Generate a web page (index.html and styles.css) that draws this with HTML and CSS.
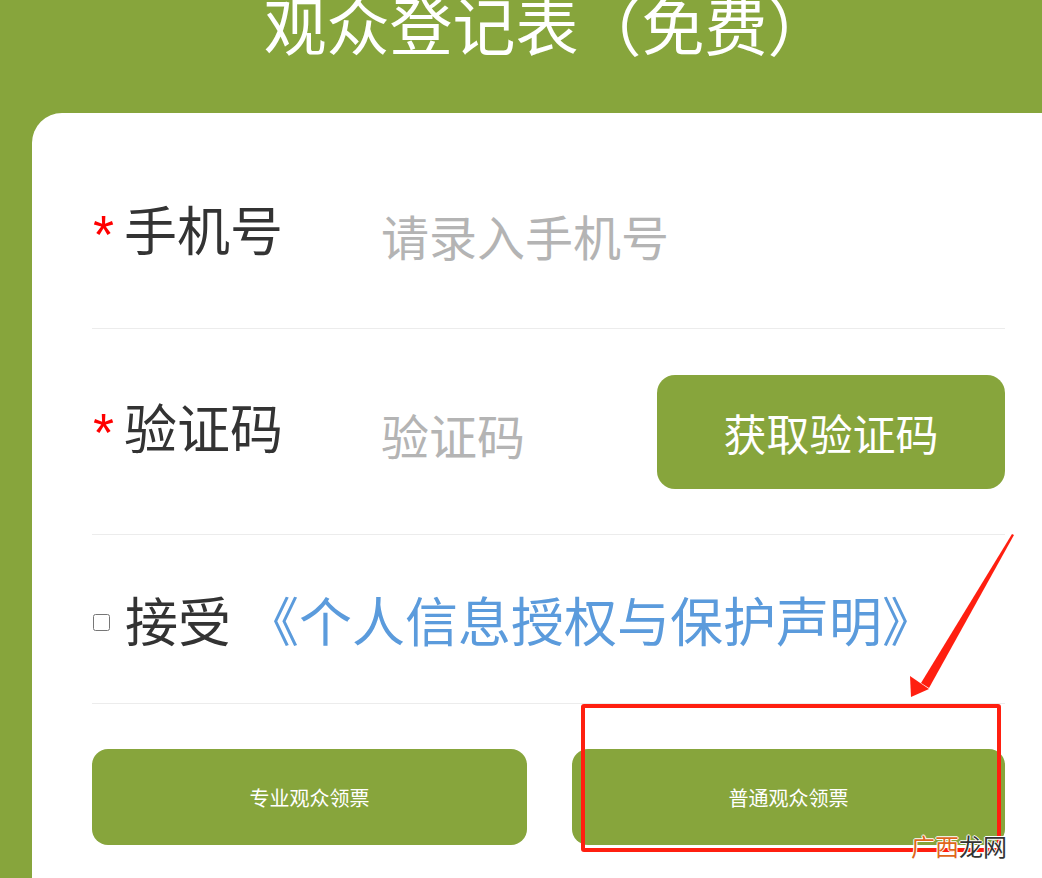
FILE: index.html
```html
<!DOCTYPE html>
<html lang="zh-CN">
<head>
<meta charset="utf-8">
<title>观众登记表（免费）</title>
<link rel="stylesheet" href="styles.css">
</head>
<body>
<div class="page">
  <h1 class="title">观众登记表（免费）</h1>
  <form class="card">
    <div class="row row-phone">
      <label class="label"><span class="req">*</span>手机号</label>
      <input class="field" type="text" placeholder="请录入手机号">
    </div>
    <div class="row row-code">
      <label class="label"><span class="req">*</span>验证码</label>
      <input class="field field-code" type="text" placeholder="验证码">
      <button type="button" class="btn-code">获取验证码</button>
    </div>
    <div class="row row-agree">
      <input class="check" type="checkbox">
      <span class="agree">接受</span>
      <a class="link">《个人信息授权与保护声明》</a>
    </div>
    <div class="actions">
      <button type="button" class="btn">专业观众领票</button>
      <button type="button" class="btn">普通观众领票</button>
    </div>
  </form>
  <div class="highlight"></div>
  <svg class="arrow" width="140" height="185" viewBox="0 0 140 185">
    <path d="M122 9 L124 10 L39 163 L31 158 Z" fill="#ff1f10"/>
    <path d="M21 172 L20 151 L39 164 Z" fill="#ff1f10"/>
  </svg>
  <div class="watermark"><span class="wm-a">广西</span><span class="wm-b">龙网</span></div>
</div>
</body>
</html>
```

FILE: styles.css
```css
html, body {
  margin: 0;
  padding: 0;
}
body {
  background: #87a53c;
  font-family: "Noto Sans CJK SC", "Noto Sans", sans-serif;
  overflow: hidden;
}
.page {
  position: relative;
  width: 1042px;
  height: 878px;
  overflow: hidden;
}
.title {
  margin: -8px 0 0 0;
  padding-left: 52px;
  height: 121px;
  line-height: 62px;
  font-size: 63px;
  font-weight: 400;
  color: #fff;
  text-align: center;
  white-space: nowrap;
}
.card {
  margin: 0 -60px 0 32px;
  background: #fff;
  border-radius: 30px 30px 0 0;
  padding: 25px 0 40px 60px;
  height: 800px;
}
.row {
  width: 913px;
  display: flex;
  align-items: center;
  border-bottom: 1px solid #ececec;
}
.row-phone { height: 190px; }
.row-code { height: 205px; }
.row-agree { height: 168px; }
.label {
  width: 289px;
  flex: none;
  display: block;
  font-size: 53px;
  line-height: 1.3;
  color: #333;
  margin-bottom: 10px;
  white-space: nowrap;
}
.req {
  display: inline-block;
  width: 32px;
  padding-left: 1px;
  box-sizing: border-box;
  color: #ff0000;
  font-family: "Liberation Sans", sans-serif;
  font-size: 54px;
  line-height: 0;
  position: relative;
  top: 2px;
}
.field {
  flex: 1;
  min-width: 0;
  border: 0;
  outline: 0;
  padding: 0;
  margin-top: 4px;
  background: transparent;
  font-family: "Noto Sans CJK SC", sans-serif;
  font-size: 48px;
  color: #333;
}
.field::placeholder {
  color: #b4b4b4;
}
.btn-code {
  flex: none;
  width: 348px;
  height: 114px;
  border: 0;
  border-radius: 18px;
  background: #87a53c;
  color: #fff;
  font-family: "Noto Sans CJK SC", sans-serif;
  font-size: 43px;
  padding: 0;
}
.check {
  width: 17px;
  height: 17px;
  margin: 6px 15px 0 1px;
}
.agree {
  font-size: 53px;
  color: #333;
  margin-right: 15px;
}
.link {
  font-size: 53px;
  color: #5b9bdc;
  white-space: nowrap;
}
.actions {
  width: 913px;
  display: flex;
  justify-content: space-between;
  padding-top: 45px;
}
.btn {
  width: 435px;
  height: 96px;
  border: 0;
  border-radius: 16px;
  background: #87a53c;
  color: #fff;
  font-family: "Noto Sans CJK SC", sans-serif;
  font-size: 20px;
  padding: 0;
}
.btn + .btn { width: 433px; }
.highlight {
  position: absolute;
  left: 581px;
  top: 704px;
  width: 420px;
  height: 148px;
  box-sizing: border-box;
  border: 4px solid #ff1f10;
  border-radius: 3px;
}
.arrow {
  position: absolute;
  left: 890px;
  top: 525px;
}
.watermark {
  position: absolute;
  left: 911px;
  top: 830px;
  font-size: 24px;
  line-height: 32px;
  white-space: nowrap;
}
.wm-a {
  color: #e0661c;
  text-shadow: 1px 0 #fff, -1px 0 #fff, 0 1px #fff, 0 -1px #fff;
}
.wm-b {
  color: #333;
  text-shadow: 1px 0 #fff, -1px 0 #fff, 0 1px #fff, 0 -1px #fff;
}
```
